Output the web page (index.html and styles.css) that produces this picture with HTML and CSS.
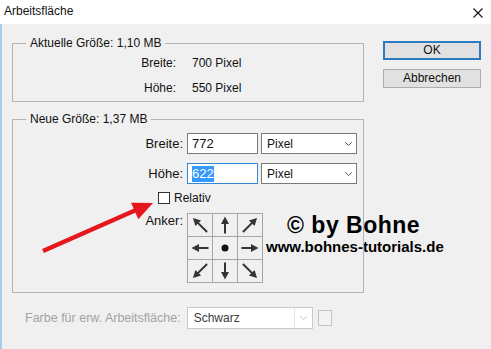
FILE: index.html
```html
<!DOCTYPE html>
<html lang="de">
<head>
<meta charset="utf-8">
<title>Arbeitsfläche</title>
<link rel="stylesheet" href="styles.css">
</head>
<body>
<div class="titlebar">
  <span class="title">Arbeitsfläche</span>
  <svg class="close" width="10" height="10" viewBox="0 0 10 10"><path d="M0.5 0.5L9.5 9.5M9.5 0.5L0.5 9.5" stroke="#111" stroke-width="1.1" fill="none"/></svg>
</div>
<div class="client">
  <div class="main">
    <fieldset class="group current">
      <legend>Aktuelle Größe: 1,10 MB</legend>
      <div class="info-grid">
        <span class="lbl">Breite:</span><span class="val">700 Pixel</span>
        <span class="lbl">Höhe:</span><span class="val">550 Pixel</span>
      </div>
    </fieldset>
    <fieldset class="group new">
      <legend>Neue Größe: 1,37 MB</legend>
      <div class="row">
        <span class="lbl2">Breite:</span>
        <div class="input">772</div>
        <div class="select"><span>Pixel</span><svg class="chev" width="7" height="4" viewBox="0 0 7 4"><path d="M0.3 0.3L3.5 3.5L6.7 0.3" stroke="#555" stroke-width="1" fill="none"/></svg></div>
      </div>
      <div class="row row-gap">
        <span class="lbl2">Höhe:</span>
        <div class="input focused"><span class="sel">622</span></div>
        <div class="select"><span>Pixel</span><svg class="chev" width="7" height="4" viewBox="0 0 7 4"><path d="M0.3 0.3L3.5 3.5L6.7 0.3" stroke="#555" stroke-width="1" fill="none"/></svg></div>
      </div>
      <div class="relativ">
        <span class="check"></span><span>Relativ</span>
      </div>
      <div class="anker">
        <span class="lbl2 anker-lbl">Anker:</span>
        <div class="anchor-grid">
          <div class="cell"><svg viewBox="0 0 24 22" width="24" height="22"><g transform="rotate(-135 12 11)"><path d="M2 11H15" stroke="#333" stroke-width="2"/><path d="M22 11L14.5 7L14.5 15Z" fill="#333"/></g></svg></div>
          <div class="cell"><svg viewBox="0 0 24 22" width="24" height="22"><g transform="rotate(-90 12 11)"><path d="M3.5 11H14" stroke="#333" stroke-width="2"/><path d="M20.5 11L13 7L13 15Z" fill="#333"/></g></svg></div>
          <div class="cell"><svg viewBox="0 0 24 22" width="24" height="22"><g transform="rotate(-45 12 11)"><path d="M2 11H15" stroke="#333" stroke-width="2"/><path d="M22 11L14.5 7L14.5 15Z" fill="#333"/></g></svg></div>
          <div class="cell"><svg viewBox="0 0 24 22" width="24" height="22"><g transform="rotate(180 12 11)"><path d="M3.5 11H14" stroke="#333" stroke-width="2"/><path d="M20.5 11L13 7L13 15Z" fill="#333"/></g></svg></div>
          <div class="cell"><svg viewBox="0 0 24 22" width="24" height="22"><circle cx="12" cy="11" r="3.5" fill="#111"/></svg></div>
          <div class="cell"><svg viewBox="0 0 24 22" width="24" height="22"><g><path d="M3.5 11H14" stroke="#333" stroke-width="2"/><path d="M20.5 11L13 7L13 15Z" fill="#333"/></g></svg></div>
          <div class="cell"><svg viewBox="0 0 24 22" width="24" height="22"><g transform="rotate(135 12 11)"><path d="M2 11H15" stroke="#333" stroke-width="2"/><path d="M22 11L14.5 7L14.5 15Z" fill="#333"/></g></svg></div>
          <div class="cell"><svg viewBox="0 0 24 22" width="24" height="22"><g transform="rotate(90 12 11)"><path d="M3.5 11H14" stroke="#333" stroke-width="2"/><path d="M20.5 11L13 7L13 15Z" fill="#333"/></g></svg></div>
          <div class="cell"><svg viewBox="0 0 24 22" width="24" height="22"><g transform="rotate(45 12 11)"><path d="M2 11H15" stroke="#333" stroke-width="2"/><path d="M22 11L14.5 7L14.5 15Z" fill="#333"/></g></svg></div>
        </div>
      </div>
    </fieldset>
    <div class="bottom">
      <span class="dlabel">Farbe für erw. Arbeitsfläche:</span>
      <div class="dsel">
        <span class="dsel-text">Schwarz</span>
        <span class="dsel-arrow"><svg width="7" height="4" viewBox="0 0 7 4"><path d="M0.3 0.3L3.5 3.5L6.7 0.3" stroke="#c4c4c4" stroke-width="1" fill="none"/></svg></span>
      </div>
      <span class="swatch"></span>
    </div>
  </div>
  <div class="actions">
    <div class="btn default">OK</div>
    <div class="btn">Abbrechen</div>
  </div>
</div>
<div class="watermark">
  <div class="wm1">© by Bohne</div>
  <div class="wm2">www.bohnes-tutorials.de</div>
</div>
<svg class="red-arrow" width="120" height="58" viewBox="0 0 120 58">
  <path d="M5 53L98 12" stroke="#e5161c" stroke-width="4.5" fill="none"/>
  <path d="M115 5L93.1 4.7L100.3 21.3Z" fill="#e5161c"/>
</svg>
</body>
</html>
```
FILE: styles.css
```css
html {
  background: #f0f0f0;
}
body {
  margin: 0;
  font-family: "Liberation Sans", Arial, sans-serif;
  font-size: 12px;
  color: #111;
}
.titlebar {
  height: 24px;
  background: #fff;
  display: flex;
  align-items: center;
  justify-content: space-between;
  padding: 0 8px 0 4px;
}
.title {
  font-size: 12px;
  line-height: 14px;
  margin-top: -2px;
}
.close {
  display: block;
  margin-top: 1px;
}
.client {
  display: flex;
  align-items: flex-start;
  height: 325px;
  box-sizing: border-box;
  border-left: 2px solid #a9cbeb;
}
.main {
  margin-left: 10px;
  padding-top: 12px;
  width: 352px;
}
.group {
  margin: 0;
  border: 1px solid #b4b4b4;
  min-width: 0;
  width: 352px;
  box-sizing: border-box;
}
.group legend {
  margin-left: 13px;
  padding: 0 4px;
  font-size: 12px;
  line-height: 14px;
}
.current {
  padding: 6px 0 6px;
}
.info-grid {
  display: grid;
  grid-template-columns: 163px auto;
  column-gap: 16px;
  row-gap: 11px;
  line-height: 14px;
}
.lbl {
  text-align: right;
}
.new {
  margin-top: 10px;
  padding: 7px 0 9px;
}
.row {
  display: flex;
  align-items: center;
  height: 21px;
}
.row-gap {
  margin-top: 9px;
}
.lbl2 {
  width: 170px;
  margin-right: 4px;
  text-align: right;
  font-size: 13px;
}
.input {
  width: 71px;
  height: 21px;
  box-sizing: border-box;
  border: 1px solid #7a7a7a;
  background: #fff;
  padding-left: 4px;
  font-size: 13px;
  display: flex;
  align-items: center;
}
.input.focused {
  border-color: #3a86d4;
}
.sel {
  background: #3399ff;
  color: #fff;
  line-height: 16px;
  height: 16px;
}
.select {
  width: 96px;
  height: 21px;
  margin-left: 3px;
  box-sizing: border-box;
  border: 1px solid #7a7a7a;
  background: #fff;
  display: flex;
  align-items: center;
  justify-content: space-between;
  padding: 0 4px 0 5px;
  font-size: 12px;
}
.chev {
  display: block;
}
.relativ {
  margin-top: 7px;
  height: 14px;
  padding-left: 145px;
  display: flex;
  align-items: center;
  font-size: 12px;
}
.check {
  width: 12px;
  height: 12px;
  box-sizing: border-box;
  border: 1px solid #333;
  background: #fff;
  margin-right: 4px;
}
.anker {
  margin-top: 8px;
  display: flex;
  align-items: flex-start;
}
.anker-lbl {
  line-height: 16px;
}
.anchor-grid {
  display: grid;
  grid-template-columns: repeat(3, 24px);
  grid-auto-rows: 22px;
  gap: 1px;
  padding: 1px;
  background: #a6a6a6;
}
.cell {
  background: #f0f0f0;
}
.cell svg {
  display: block;
}
.bottom {
  margin-top: 14px;
  padding-left: 13px;
  display: flex;
  align-items: center;
}
.dlabel {
  color: #a3a3a3;
  font-size: 12.5px;
  margin-right: 6px;
}
.dsel {
  width: 126px;
  height: 22px;
  box-sizing: border-box;
  border: 1px solid #c9c9c9;
  background: #fff;
  display: flex;
  align-items: center;
}
.dsel-text {
  flex: 1;
  padding-left: 6px;
  color: #3a3a3a;
  font-size: 12px;
}
.dsel-arrow {
  width: 17px;
  height: 100%;
  border-left: 1px solid #e4e4e4;
  display: flex;
  align-items: center;
  justify-content: center;
}
.swatch {
  width: 14px;
  height: 16px;
  box-sizing: border-box;
  border: 1px solid #c3c3c3;
  background: #f3f3f3;
  margin-left: 5px;
}
.actions {
  margin-left: 19px;
  padding-top: 17px;
  width: 98px;
  display: flex;
  flex-direction: column;
  gap: 9px;
}
.btn {
  height: 19px;
  box-sizing: border-box;
  border: 1px solid #adadad;
  background: #e1e1e1;
  text-align: center;
  font-size: 12px;
  line-height: 17px;
}
.btn.default {
  border: 2px solid #2f7bbf;
  line-height: 15px;
}
.watermark {
  position: absolute;
  left: 266px;
  top: 212px;
  z-index: -1;
  font-weight: bold;
  color: #000;
}
.wm1 {
  font-size: 23px;
  line-height: 26px;
  letter-spacing: 0.5px;
  padding-left: 21px;
}
.wm2 {
  font-size: 15px;
  line-height: 18px;
}
.red-arrow {
  position: absolute;
  left: 38px;
  top: 198px;
}
```
